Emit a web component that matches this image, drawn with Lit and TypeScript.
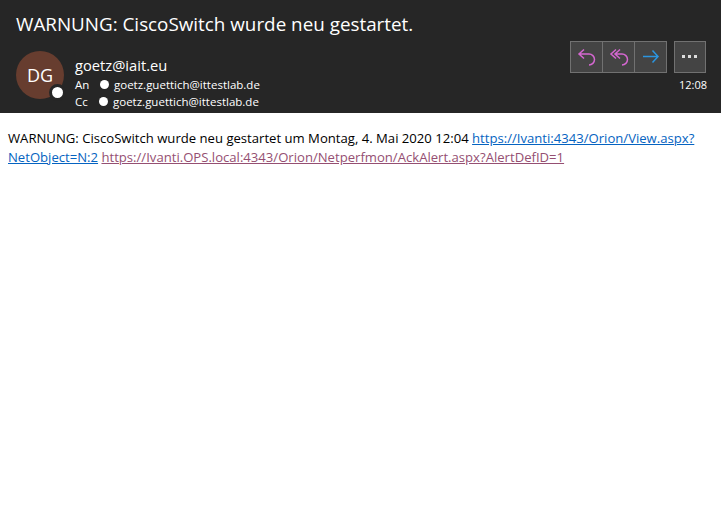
import { LitElement, html, css } from "lit";
import { customElement } from "lit/decorators.js";

@customElement("app-root")
export class AppRoot extends LitElement {
  static styles = css`
    :host { display: block; width: 721px; height: 506px; background: #fff; font-family: "Open Sans", "Noto Sans", sans-serif; overflow: hidden; }
    .hdr { background: #262626; height: 113px; box-sizing: border-box; padding: 11px 13px 0 16px; color: #fff; display: flex; flex-direction: column; }
    .subject { font-size: 18.83px; line-height: 26px; white-space: nowrap; }
    .row { display: flex; justify-content: space-between; margin-top: 4px; }
    .left { display: flex; padding-top: 10px; }
    .avatar { width: 48px; height: 48px; border-radius: 50%; background: #673d2f; position: relative; display: flex; align-items: center; justify-content: center; font-size: 18px; margin-right: 11px; }
    .presence { position: absolute; right: -2px; bottom: -2px; width: 11px; height: 11px; border-radius: 50%; background: #fff; border: 3px solid #262626; }
    .info { display: flex; flex-direction: column; padding-top: 4px; }
    .from { font-size: 14.7px; line-height: 20px; margin-bottom: 1px; }
    .rcpt { display: flex; align-items: center; font-size: 11.5px; line-height: 17px; white-space: nowrap; }
    .lbl { width: 25px; }
    .lbl.cc { width: 24px; }
    .dot { width: 9px; height: 9px; border-radius: 50%; background: #fff; margin-right: 5px; }
    .right { display: flex; flex-direction: column; align-items: flex-end; }
    .btns { display: flex; gap: 7px; margin-right: 2px; }
    .grp { display: flex; }
    .btn { width: 31px; height: 30px; background: #444; border: 1px solid #717171; display: flex; align-items: center; justify-content: center; }
    .btn.more { width: 30px; }
    .grp .btn + .btn { border-left: none; }
    .btn svg { display: block; }
    .time { font-size: 11px; line-height: 16px; margin-top: 4px; margin-right: 1px; }
    .body { padding: 16px 8px; font-size: 13.12px; line-height: 19px; color: #000; }
    a { text-decoration: underline; }
    .l1 { color: #0563c1; }
    .l2 { color: #954f72; }
  `;
  render() {
    return html`
      <div class="hdr">
        <div class="subject">WARNUNG: CiscoSwitch wurde neu gestartet.</div>
        <div class="row">
          <div class="left">
            <div class="avatar">DG<span class="presence"></span></div>
            <div class="info">
              <div class="from">goetz@iait.eu</div>
              <div class="rcpt"><span class="lbl">An</span><span class="dot"></span>goetz.guettich@ittestlab.de</div>
              <div class="rcpt"><span class="lbl cc">Cc</span><span class="dot"></span>goetz.guettich@ittestlab.de</div>
            </div>
          </div>
          <div class="right">
            <div class="btns">
              <div class="grp">
                <div class="btn"><svg width="20" height="20" viewBox="0 0 20 20" fill="none" stroke="#d467d0" stroke-width="1.5"><path d="M7 2.500 2 7l5 4.500M2 7h10a5.500 5.500 0 0 1 0 11"/></svg></div>
                <div class="btn"><svg width="20" height="20" viewBox="0 0 20 20" fill="none" stroke="#d467d0" stroke-width="1.500"><path d="M7 2.500 2 7l5 4.500M11 2.500 6 7l5 4.500M6 7h7a5.500 5.500 0 0 1 0 11"/></svg></div>
                <div class="btn"><svg width="20" height="20" viewBox="0 0 20 20" fill="none" stroke="#2b95e0" stroke-width="1.500"><path d="M2 9.500h15M11.500 3.500l5.500 6-5.500 6"/></svg></div>
              </div>
              <div class="btn more"><svg width="20" height="20" viewBox="0 0 20 20" fill="#ddd"><rect x="2" y="8" width="3" height="3"/><rect x="8" y="8" width="3" height="3"/><rect x="14" y="8" width="3" height="3"/></svg></div>
            </div>
            <div class="time">12:08</div>
          </div>
        </div>
      </div>
      <div class="body">WARNUNG: CiscoSwitch wurde neu gestartet um Montag, 4. Mai 2020 12:04 <a class="l1" href="#">https://Ivanti:4343/Orion/View.aspx?<br>NetObject=N:2</a> <a class="l2" href="#">https://Ivanti.OPS.local:4343/Orion/Netperfmon/AckAlert.aspx?AlertDefID=1</a></div>
    `;
  }
}
